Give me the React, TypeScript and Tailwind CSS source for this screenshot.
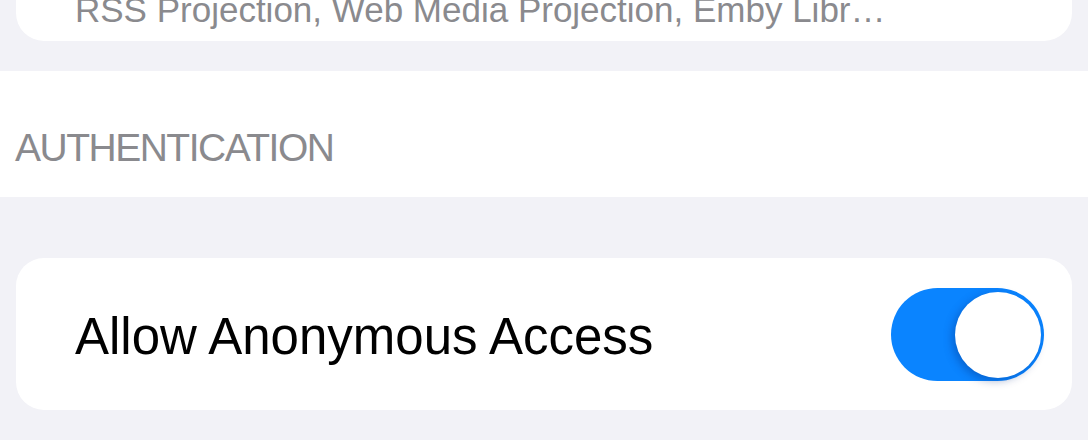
export default function App() {
  return (
    <div
      className="w-[1088px] h-[440px] overflow-hidden bg-[#f2f2f7]"
      style={{ fontFamily: '"Liberation Sans", Arial, sans-serif' }}
    >
      {/* Tail of the previous list card */}
      <div className="mx-4 mt-[-40px] h-[81px] rounded-b-[28px] bg-white flex items-end pl-[59px] pb-[14px]">
        <span className="text-[35px] leading-none text-[#8a8a8e] whitespace-nowrap">
          RSS Projection, Web Media Projection, Emby Libr…
        </span>
      </div>

      {/* Section header */}
      <div className="mt-[30px] h-[126px] bg-white flex items-end pl-[15px] pb-[30px]">
        <span className="text-[39px] leading-none tracking-[-1.5px] text-[#8a8a8e]">
          AUTHENTICATION
        </span>
      </div>

      {/* Settings card with a switch */}
      <div className="mx-4 mt-[61px] h-[152px] rounded-[28px] bg-white flex items-center justify-between pl-[59px] pr-[28px]">
        <span className="text-[51px] leading-none text-black pt-1">Allow Anonymous Access</span>
        <button
          type="button"
          aria-pressed="true"
          className="relative w-[153px] h-[93px] rounded-full bg-[#0a84ff]"
        >
          <span className="absolute right-[3px] top-[4px] w-[86px] h-[86px] rounded-full bg-white shadow-[-3px_3px_8px_rgba(0,40,120,0.35)]" />
        </button>
      </div>
    </div>
  );
}
